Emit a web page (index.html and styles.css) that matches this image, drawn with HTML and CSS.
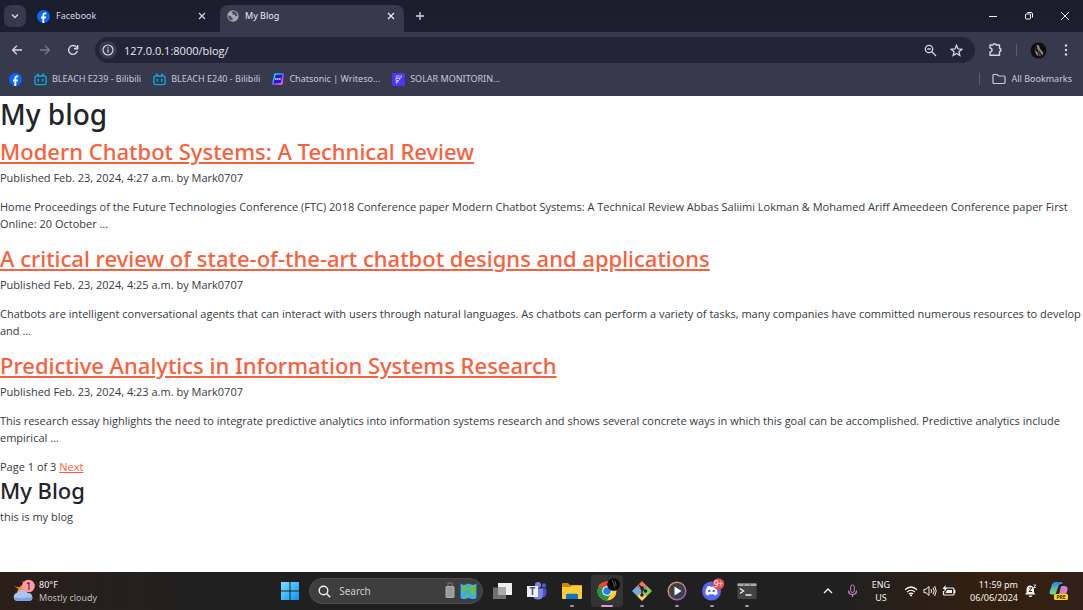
FILE: index.html
```html
<!DOCTYPE html>
<html lang="en">
<head>
<meta charset="utf-8">
<meta name="viewport" content="width=device-width, initial-scale=1">
<title>My Blog</title>
<link rel="stylesheet" href="styles.css">
</head>
<body>
<svg class="defs" aria-hidden="true">
  <defs>
    <symbol id="facebook" viewBox="0 0 12 12"><circle cx="6" cy="6" r="6" fill="#0866ff"/><path d="M5 12V7.900H3.700V6H5V5c0-1.900.9-2.700 2.500-2.700.4 0 .8.1 1 .1V4h-.8c-.8 0-1 .4-1 1v1h1.700l-.3 1.900H6.700V12z" fill="#fff"/></symbol>
    <symbol id="bilibili" viewBox="0 0 13 13"><path d="M3.500 1l1.700 1.800M9.500 1L7.800 2.800M2.700 3h7.600a1.800 1.800 0 0 1 1.800 1.800v5a1.800 1.800 0 0 1-1.800 1.800H2.700A1.800 1.800 0 0 1 .9 9.800v-5A1.800 1.800 0 0 1 2.700 3zM4.200 6.300v2M8.800 6.300v2" fill="none" stroke="#08a7dc" stroke-width="1.400" stroke-linecap="round"/></symbol>
    <symbol id="cross" viewBox="0 0 10 10"><path d="M2 2l6 6M8 2L2 8" stroke="currentColor" stroke-width="1.200"/></symbol>
  </defs>
</svg>

<header class="browser">
  <div class="tabs">
    <button class="tab-search" aria-label="Search tabs"><svg width="10" height="10" viewBox="0 0 10 10"><path d="M2 3.500L5 6.500 8 3.500" fill="none" stroke="currentColor" stroke-width="1.400"/></svg></button>
    <div class="tab">
      <svg width="13" height="13"><use href="#facebook"/></svg>
      <span class="tab-title">Facebook</span>
      <button class="icon-button" aria-label="Close Facebook"><svg width="10" height="10"><use href="#cross"/></svg></button>
    </div>
    <div class="tab tab-active">
      <svg width="12" height="12" viewBox="0 0 12 12"><circle cx="6" cy="6" r="5.700" fill="#a5a8ad"/><path d="M1.300 5.200l3 1.400.2 1.200 1.300.4-.5 2.400C2.700 10.200 1 8.300 1.300 5.200zM5.200 1.300l-.7 1.300 1.400.7-.4 1.400h2.200l.8 1.600 2-.2C10.700 3 8.300.8 5.200 1.300z" fill="#4a4d5c"/></svg>
      <span class="tab-title">My Blog</span>
      <button class="icon-button" aria-label="Close My Blog"><svg width="10" height="10"><use href="#cross"/></svg></button>
    </div>
    <button class="icon-button new-tab" aria-label="New tab"><svg width="10" height="10" viewBox="0 0 10 10"><path d="M5 1v8M1 5h8" stroke="currentColor" stroke-width="1.300"/></svg></button>
    <div class="window-controls">
      <button class="icon-button" aria-label="Minimize"><svg width="10" height="10" viewBox="0 0 10 10"><path d="M1 5.500h8" stroke="currentColor"/></svg></button>
      <button class="icon-button" aria-label="Restore"><svg width="10" height="10" viewBox="0 0 10 10"><path d="M1.500 3.500q0-.5.5-.5h4q.5 0 .5.500v4q0 .5-.5.500H2q-.5 0-.5-.5zM3.300 1.500h3.700q1.500 0 1.500 1.500v3.500" fill="none" stroke="currentColor"/></svg></button>
      <button class="icon-button" aria-label="Close window"><svg width="10" height="10" viewBox="0 0 10 10"><path d="M1 1l8 8M9 1L1 9" stroke="currentColor"/></svg></button>
    </div>
  </div>

  <div class="toolbar">
    <nav class="history" aria-label="History">
      <button class="icon-button" aria-label="Back"><svg width="12" height="12" viewBox="0 0 12 12"><path d="M11 6H1.800M5.800 1.800L1.600 6l4.200 4.200" fill="none" stroke="currentColor" stroke-width="1.300"/></svg></button>
      <button class="icon-button" aria-label="Forward" disabled><svg width="12" height="12" viewBox="0 0 12 12"><path d="M1 6h9.200M6.200 1.800L10.400 6l-4.200 4.200" fill="none" stroke="currentColor" stroke-width="1.300"/></svg></button>
      <button class="icon-button" aria-label="Reload"><svg width="12" height="12" viewBox="0 0 12 12"><path d="M10.300 7A4.400 4.400 0 1 1 9.600 3.400L10.500 4.500M10.700 1v3.700H7" fill="none" stroke="currentColor" stroke-width="1.400"/></svg></button>
    </nav>
    <div class="address">
      <button class="site-info" aria-label="Site information"><svg width="12" height="12" viewBox="0 0 12 12"><circle cx="6" cy="6" r="5" fill="none" stroke="currentColor" stroke-width="1.200"/><path d="M6 5.300v3.300M6 3.200v1.200" stroke="currentColor" stroke-width="1.200"/></svg></button>
      <input class="url" type="text" value="127.0.0.1:8000/blog/" aria-label="Address">
      <button class="icon-button" aria-label="Zoom"><svg width="13" height="13" viewBox="0 0 13 13"><circle cx="5" cy="5" r="3.700" fill="none" stroke="currentColor" stroke-width="1.300"/><path d="M7.800 7.800l4.200 4.200M3.300 5h3.400" stroke="currentColor" stroke-width="1.300"/></svg></button>
      <button class="icon-button" aria-label="Bookmark this page"><svg width="13" height="13" viewBox="0 0 13 13"><path d="M6.500 1.300l1.500 3.600 3.900.3-3 2.500.9 3.800-3.300-2-3.300 2 .9-3.800-3-2.500 3.900-.3z" fill="none" stroke="currentColor" stroke-width="1.300"/></svg></button>
    </div>
    <button class="icon-button" aria-label="Extensions"><svg width="15" height="14" viewBox="0 0 15 14"><path d="M2 2h3a1.500 1.200 0 0 1 3 0h3.500v3.500a1.500 1.500 0 0 1 0 3V12.300H2V9a1.800 1.800 0 0 0 0-4z" fill="none" stroke="currentColor" stroke-width="1.400" stroke-linejoin="round"/></svg></button>
    <span class="rule"></span>
    <button class="icon-button" aria-label="Profile"><svg width="17" height="17" viewBox="0 0 17 17"><circle cx="8.500" cy="8.500" r="8" fill="#100f10"/><path d="M6.500 2.500l2.500 1 1 3 3.500 4.500-1 2.500-3-4-2-2zM4.500 8l3 2 1 4-2-1z" fill="#8b847e"/><path d="M8 8l3.500 6.500-2.500-.5zM5 5l1.500 2-1 1z" fill="#574f4c"/></svg></button>
    <button class="icon-button" aria-label="Menu"><svg width="12" height="14" viewBox="0 0 12 14"><g fill="currentColor"><circle cx="6" cy="2.500" r="1.200"/><circle cx="6" cy="7" r="1.200"/><circle cx="6" cy="11.500" r="1.200"/></g></svg></button>
  </div>

  <nav class="bookmarks" aria-label="Bookmarks">
    <a href="#" aria-label="Facebook"><svg width="13" height="13"><use href="#facebook"/></svg></a>
    <a href="#"><svg width="13" height="13"><use href="#bilibili"/></svg>BLEACH E239 - Bilibili</a>
    <a href="#"><svg width="13" height="13"><use href="#bilibili"/></svg>BLEACH E240 - Bilibili</a>
    <a href="#"><svg width="12" height="12" viewBox="0 0 12 12"><defs><linearGradient id="sonic" x1="0" y1="0" x2="1" y2="1"><stop offset=".25" stop-color="#17c6ef"/><stop offset=".55" stop-color="#8c43ff"/><stop offset=".85" stop-color="#ff6ad7"/></linearGradient></defs><path d="M3 1h8.200L9.700 11H.7z" fill="#261bcf" stroke="url(#sonic)" stroke-width="1.600" stroke-linejoin="round"/><path d="M3 6h6" stroke="#e5ddff" stroke-width="1.500" stroke-dasharray="1.600 .4"/></svg>Chatsonic | Writeso...</a>
    <a href="#"><svg width="13" height="13" viewBox="0 0 13 13"><rect width="13" height="13" rx="1.500" fill="#4b38f5"/><path d="M4 3h6L8.500 5H4.500zM3.800 5.500h4.500L6.800 7.500H4.200zM4 8h2.500L4.500 10.500z" fill="none" stroke="#d4ceff" stroke-width=".8"/></svg>SOLAR MONITORIN...</a>
    <span class="rule all-rule"></span>
    <a href="#"><svg width="14" height="12" viewBox="0 0 14 12"><path d="M1 9.500v-7q0-1 1-1h3l1.500 1.500H12q1 0 1 1v5.500q0 1-1 1H2q-1 0-1-1z" fill="none" stroke="currentColor" stroke-width="1.200"/></svg>All Bookmarks</a>
  </nav>
</header>

<main class="blog">
  <h1>My blog</h1>
  <article>
    <h2><a href="#">Modern Chatbot Systems: A Technical Review</a></h2>
    <p>Published Feb. 23, 2024, 4:27 a.m. by Mark0707</p>
    <p>Home Proceedings of the Future Technologies Conference (FTC) 2018 Conference paper Modern Chatbot Systems: A Technical Review Abbas Saliimi Lokman &amp; Mohamed Ariff Ameedeen Conference paper First Online: 20 October …</p>
  </article>
  <article>
    <h2><a href="#">A critical review of state-of-the-art chatbot designs and applications</a></h2>
    <p>Published Feb. 23, 2024, 4:25 a.m. by Mark0707</p>
    <p>Chatbots are intelligent conversational agents that can interact with users through natural languages. As chatbots can perform a variety of tasks, many companies have committed numerous resources to develop and …</p>
  </article>
  <article>
    <h2><a href="#">Predictive Analytics in Information Systems Research</a></h2>
    <p>Published Feb. 23, 2024, 4:23 a.m. by Mark0707</p>
    <p>This research essay highlights the need to integrate predictive analytics into information systems research and shows several concrete ways in which this goal can be accomplished. Predictive analytics include empirical …</p>
  </article>
  <nav class="pagination" aria-label="Pages">Page 1 of 3 <a href="#">Next</a></nav>
  <section>
    <h2>My Blog</h2>
    <p>this is my blog</p>
  </section>
</main>

<footer class="taskbar">
  <button class="weather">
    <svg width="22" height="24" viewBox="0 0 22 24"><path d="M9 2l1.500 3L6 8.500 1 7l4.500 3-2 4h9V4z" fill="#f39b18"/><path d="M5 22a4 4 0 0 1-.5-8 5.500 5.500 0 0 1 10 0A4 4 0 0 1 16 22z" fill="#a8c4f2"/><path d="M1.500 18.500Q9 20 19.500 18q0 4-3.500 4H5q-3 0-3.500-3.500z" fill="#7ba1e5"/><circle cx="15.500" cy="7" r="6.300" fill="#ff98a5"/><text x="15.500" y="10.500" text-anchor="middle" class="badge-one">1</text></svg>
    <span>80°F<br><span class="muted">Mostly cloudy</span></span>
  </button>

  <div class="apps">
    <button class="app" aria-label="Start"><svg width="20" height="20" viewBox="0 0 20 20"><defs><linearGradient id="win" x1="0" y1="0" x2="1" y2="1"><stop stop-color="#80dcff"/><stop offset="1" stop-color="#0795f4"/></linearGradient></defs><path d="M1 1h8.500v8.500H1zM10.500 1H19v8.500h-8.500zM1 10.500h8.500V19H1zM10.500 10.500H19V19h-8.500z" fill="url(#win)"/></svg></button>
    <label class="search">
      <svg width="13" height="13" viewBox="0 0 13 13"><circle cx="5.500" cy="5.500" r="4.300" fill="none" stroke="currentColor" stroke-width="1.400"/><path d="M8.800 8.800l3.400 3.400" stroke="currentColor" stroke-width="1.500"/></svg>
      <input type="search" placeholder="Search" aria-label="Search">
      <svg width="34" height="20" viewBox="0 0 34 20"><path d="M4 6V2h4v4" fill="none" stroke="#777688"/><rect x="1.500" y="5" width="9" height="12" rx="1.500" fill="#aaa"/><path d="M4 6v10M6 6v10M8 6v10" stroke="#8c8c8c"/><path d="M3 17v1.500M9 17v1.500" stroke="#333"/><path d="M16 2.500l4 1.500 4.500-1.500L29 4l4-1.500V17l-4 1.200-4.500-1.200-4.500 1.200L16 17z" fill="#3eabea"/><path d="M18 5l5-.5 1 3-3 2-1 3-2-3zM25 9l3-5 4 1-1 7-2 3-2-3zM21 14l3-2 1 3-3 1z" fill="#72bc3c"/><path d="M16.500 3v14M32.500 3v14" stroke="#1675be"/></svg>
    </label>
    <button class="app" aria-label="Task view"><svg width="20" height="20" viewBox="0 0 20 20"><path d="M6 2h14v12H6z" fill="#eee"/><path d="M1 6.500h13V18H1z" fill="#707070"/><path d="M6 6.500h8V14H6z" fill="#aaa"/></svg></button>
    <button class="app" aria-label="Teams"><svg width="22" height="20" viewBox="0 0 22 20"><circle cx="12" cy="4" r="3" fill="#7b83eb"/><circle cx="18" cy="4.500" r="2.200" fill="#5059c9"/><path d="M15 7.500h5.500V12q0 4-4 4.500z" fill="#4651bd"/><path d="M8 7.500h9v6q0 5-5 5t-5-5z" fill="#7b83eb"/><path d="M1 5h11v11H1z" fill="#f1f2ff"/><text x="6.500" y="14" text-anchor="middle" class="teams-letter">T</text></svg></button>
    <button class="app running" aria-label="File Explorer"><svg width="22" height="20" viewBox="0 0 22 20"><path d="M1 3q0-1 1-1h5l2 2h11q1 0 1 1v3H1z" fill="#cf8704"/><path d="M1 6h8l2-1.500h10V17q0 1-1 1H2q-1 0-1-1z" fill="#ffcb38"/><path d="M5 18v-4q0-1.300 1.300-1.300h9.400Q17 12.700 17 14v4z" fill="#087bc3"/></svg></button>
    <button class="app running selected" aria-label="Chrome"><svg width="26" height="26" viewBox="0 0 26 26"><circle cx="13" cy="13" r="9.500" fill="#ffce32"/><path d="M13 13L4.800 8.200A9.500 9.500 0 0 1 21.300 8.300H13z" fill="#ea4335"/><path d="M13 13L4.800 8.200A9.500 9.500 0 0 0 13 22.500l4-7z" fill="#269447"/><circle cx="13" cy="13" r="4.800" fill="#fff"/><circle cx="13" cy="13" r="3.800" fill="#247ce7"/><circle cx="19.500" cy="6.500" r="6.300" fill="#070707"/><path d="M18 2l1.500 3 1 5M21 3l1 5" stroke="#555" fill="none"/></svg></button>
    <button class="app running" aria-label="Git"><svg width="22" height="22" viewBox="0 0 22 22"><path d="M11 1l5 5-5 5-5-5z" fill="#ee7467"/><path d="M6 6l5 5-5 5-5-5z" fill="#72abea"/><path d="M16 6l5 5-5 5-5-5z" fill="#82c957"/><path d="M11 11l5 5-5 5-5-5z" fill="#f6d66d"/><path d="M8 5l6 6M11 8v7" stroke="#222" stroke-width="1.400"/><g fill="#222"><circle cx="11" cy="8" r="1.800"/><circle cx="14.500" cy="11" r="1.800"/><circle cx="11" cy="15" r="1.800"/></g></svg></button>
    <button class="app running" aria-label="Media Player"><svg width="20" height="20" viewBox="0 0 20 20"><defs><linearGradient id="player" x1="0" y1="0" x2="1" y2="1"><stop stop-color="#f6a13e"/><stop offset="1" stop-color="#9b4ec1"/></linearGradient></defs><circle cx="10" cy="10" r="8.800" fill="#38424e" stroke="url(#player)" stroke-width="1.500"/><path d="M7.500 5.500L14.500 10l-7 4.500z" fill="#fff"/></svg></button>
    <button class="app running" aria-label="Discord, 9+ notifications"><svg width="26" height="26" viewBox="0 0 26 26"><circle cx="12.500" cy="13" r="9.500" fill="#5865f2"/><path d="M8.500 8.500l2-.7.6 1h2.800l.6-1 2 .7q2.300 3 2 7.500-1.500 1.200-3 1.500l-.8-1.300h-4.400l-.8 1.300Q8 17.200 6.500 16q-.3-4.500 2-7.500z" fill="#fff"/><circle cx="10.300" cy="13" r="1.300" fill="#5865f2"/><circle cx="14.700" cy="13" r="1.300" fill="#5865f2"/><circle cx="19.500" cy="6" r="5.800" fill="#e74b50"/><text x="19.500" y="9" text-anchor="middle" class="badge-nine">9+</text></svg></button>
    <button class="app running" aria-label="Terminal"><svg width="20" height="18" viewBox="0 0 20 18"><rect x=".5" y="1" width="19" height="16" rx="1" fill="#444"/><path d="M.5 1.500h19V4H.5z" fill="#aaa"/><path d="M7 1.500V4M13 1.500V4" stroke="#666"/><path d="M3 6.500l3.500 2.500L3 11.500M8.500 13h6" fill="none" stroke="#eee" stroke-width="1.400"/></svg></button>
  </div>

  <div class="tray">
    <button class="icon-button" aria-label="Show hidden icons"><svg width="10" height="10" viewBox="0 0 10 10"><path d="M1 7l4-4 4 4" fill="none" stroke="currentColor" stroke-width="1.400"/></svg></button>
    <button class="icon-button mic" aria-label="Microphone"><svg width="11" height="14" viewBox="0 0 11 14"><rect x="3.700" y="1" width="3.600" height="7.500" rx="1.800" fill="none" stroke="currentColor"/><path d="M1.500 6.500q0 4 4 4t4-4M5.500 10.500V13" fill="none" stroke="currentColor" stroke-width="1.200"/></svg></button>
    <span class="language">ENG<br>US</span>
    <button class="icon-button status" aria-label="Network, volume and battery">
      <svg width="14" height="12" viewBox="0 0 14 12"><path d="M1 4.700q6-5.400 12 0M3 7q4-3.500 8 0M4.900 9q2.100-1.900 4.200 0" fill="none" stroke="currentColor" stroke-width="1.200"/><circle cx="7" cy="10.300" r="1.100" fill="currentColor"/></svg>
      <svg width="14" height="12" viewBox="0 0 14 12"><path d="M1 4.300h2L6 1.500v9L3 7.700H1zM8 4q1.500 2 0 4M10 2.500q2.500 3.500 0 7M11.700 1q3 5 0 10" fill="none" stroke="currentColor"/></svg>
      <svg width="14" height="12" viewBox="0 0 14 12"><path d="M5 3h6q1 0 1 1v5q0 1-1 1H2.500q-1 0-1-1V6M12.800 5v3" fill="none" stroke="currentColor" stroke-width="1.200"/><path d="M5 5h5v3H3.500zM3.500 0L.5 4h2v3l3-4.500h-2z" fill="currentColor"/></svg>
    </button>
    <button class="clock">11:59 pm<br>06/06/2024</button>
    <button class="icon-button" aria-label="Notifications"><svg width="13" height="14" viewBox="0 0 13 14"><path d="M1 10.500l1.500-2V5Q3 1.500 6 1.500T10 5v3.500l1.500 2zM4.500 11.500h4q-.5 1.500-2 1.500t-2-1.500z" fill="currentColor"/><path d="M5 4h3L5 7.500h3" fill="none" stroke="#33241c"/><path d="M9.500 1H12L9.500 3.500H12" fill="none" stroke="currentColor" stroke-width=".8"/></svg></button>
    <button class="icon-button copilot" aria-label="Copilot preview"><svg width="22" height="22" viewBox="0 0 22 22"><defs><linearGradient id="copilot-a" x1="0" y1="0" x2="0" y2="1"><stop stop-color="#2585e5"/><stop offset="1" stop-color="#7fe27c"/></linearGradient><linearGradient id="copilot-b" x1="0" y1="0" x2="0" y2="1"><stop stop-color="#ba7cff"/><stop offset="1" stop-color="#ff845c"/></linearGradient></defs><path d="M7 2h6q2 0 1.500 2h-2q-1.500 0-2 2L8 13q-.5 1.500-2 1.500H4q-3 0-2.300-3L4 4.500Q4.800 2 7 2z" fill="url(#copilot-a)"/><path d="M14 6h2.500q3.500 0 3 3.500L18 15q-.8 2-4 2H9q1.500 0 2-2l1.500-7q.4-2 1.500-2z" fill="url(#copilot-b)"/><rect x="6" y="14" width="14" height="6" rx="1.500" fill="#ffd21c"/><text x="13" y="19" text-anchor="middle" class="pre-label">PRE</text></svg></button>
  </div>
</footer>
</body>
</html>
```
FILE: styles.css
```css
* { box-sizing: border-box; }

body {
  display: flex;
  flex-direction: column;
  min-height: 100vh;
  margin: 0;
  background: #fff;
  color: #343a40;
  font: 11px/17px "Open Sans", "Noto Sans", sans-serif;
}

button, input {
  margin: 0;
  padding: 0;
  border: 0;
  background: none;
  color: inherit;
  font: inherit;
}

svg { display: block; flex: none; }
.defs { position: absolute; width: 0; height: 0; }

.icon-button {
  display: flex;
  align-items: center;
  justify-content: center;
  flex: none;
}

/* Browser chrome */
.browser {
  background: #373a4d;
  color: #d5d5e3;
  font: 9px/14px "Noto Sans", sans-serif;
}

.tabs {
  display: flex;
  align-items: center;
  height: 32px;
  padding-left: 4px;
  background: linear-gradient(#191e2d, #1b2030);
}

.tab-search {
  display: grid;
  place-items: center;
  width: 22px;
  height: 22px;
  border-radius: 7px;
  background: #373a4d;
}

.tab {
  display: flex;
  align-items: center;
  gap: 6px;
  flex: 0 1 184px;
  min-width: 0;
  height: 27px;
  padding: 0 8px 0 7px;
}

.tab:not(.tab-active) { margin-left: 4px; flex-basis: 190px; padding-right: 13px; }
.tab-title { flex: 1; overflow: hidden; white-space: nowrap; }
.tab-active {
  align-self: flex-end;
  border-radius: 8px 8px 0 0;
  background: #373a4d;
  color: #ededf5;
  padding-bottom: 5px;
}
.new-tab { margin-left: 11px; }
.window-controls { display: flex; gap: 26px; margin-left: auto; padding-right: 13px; color: #f1f1f5; }

.toolbar {
  display: flex;
  align-items: center;
  gap: 13px;
  height: 36px;
  padding: 0 11px;
}

.history { display: flex; gap: 16px; margin-right: 3px; }
.history :disabled { color: #777988; }

.address {
  display: flex;
  align-items: center;
  gap: 13px;
  flex: 1;
  min-width: 0;
  height: 26px;
  padding: 0 12px 0 4px;
  border-radius: 13px;
  background: #222538;
}

.site-info {
  display: grid;
  place-items: center;
  width: 18px;
  height: 18px;
  margin-right: -6px;
  border-radius: 50%;
  background: #373a4d;
}

.url { flex: 1; min-width: 0; color: #e9e9f0; font: 11px "Open Sans", sans-serif; }
.rule { width: 1px; height: 12px; background: #595c6d; }

.bookmarks {
  display: flex;
  align-items: center;
  gap: 12px;
  height: 28px;
  padding: 0 11px 6px 9px;
}
.bookmarks a {
  display: flex;
  align-items: center;
  gap: 5px;
  color: #c8c8d6;
  text-decoration: none;
  white-space: nowrap;
}
.all-rule { margin-left: auto; }

/* Blog */
.blog { flex: 1; }
h1, h2 { margin: 0; color: #212529; font-family: "Noto Sans", sans-serif; font-weight: 500; }
h1 { margin-bottom: 5px; font-size: 28px; line-height: 36px; }
h2 { margin-bottom: 4px; font-size: 22px; line-height: 28px; }
p { margin: 0 0 12px; }
.blog a { color: #f9603c; }
.pagination { margin-bottom: 1px; }

/* Taskbar */
.taskbar {
  display: grid;
  grid-template-columns: 6fr auto 7fr;
  align-items: center;
  height: 38px;
  background: linear-gradient(90deg, #2b1f19, #202020 18%, #202020 77%, #35200f 93%, #302018);
  color: #f2f2f2;
  font: 9px/13px "Noto Sans", sans-serif;
}

.weather {
  display: flex;
  align-items: center;
  gap: 4px;
  padding-left: 13px;
  text-align: left;
}
.muted { color: #bbb; }
.badge-one { fill: #311; font: 10px "Noto Sans", sans-serif; }
.badge-nine { fill: #fff; font: 8px "Noto Sans", sans-serif; }
.teams-letter { fill: #4550b5; font: bold 10px "Noto Sans", sans-serif; }
.pre-label { fill: #332600; font: bold 5px "Noto Sans", sans-serif; }

.apps { display: flex; align-items: center; gap: 3px; }
.app {
  display: grid;
  place-items: center;
  position: relative;
  width: 32px;
  height: 32px;
  border-radius: 4px;
}
.running::after {
  content: "";
  position: absolute;
  bottom: 0;
  left: 14px;
  width: 4px;
  height: 2px;
  border-radius: 1px;
  background: #999;
}
.selected { background: #343434; }
.selected::after { left: 10px; width: 12px; background: #d997dc; }

.search {
  display: flex;
  align-items: center;
  gap: 8px;
  width: 174px;
  height: 26px;
  padding: 0 4px 0 8px;
  border: 1px solid #4c4c4c;
  border-radius: 13px;
  background: #3e3e3e;
}
.search input { flex: 1; min-width: 0; font-size: 10px; }
.search input::placeholder { color: #ccc; opacity: 1; }

.tray { display: flex; align-items: center; justify-content: flex-end; gap: 14px; padding-right: 13px; }
.mic { color: #c686cb; }
.language { text-align: center; }
.status { gap: 5px; }
.clock { text-align: right; white-space: nowrap; }
.clock + .icon-button { margin-left: -8px; }
.copilot { margin-left: -3px; }
```
